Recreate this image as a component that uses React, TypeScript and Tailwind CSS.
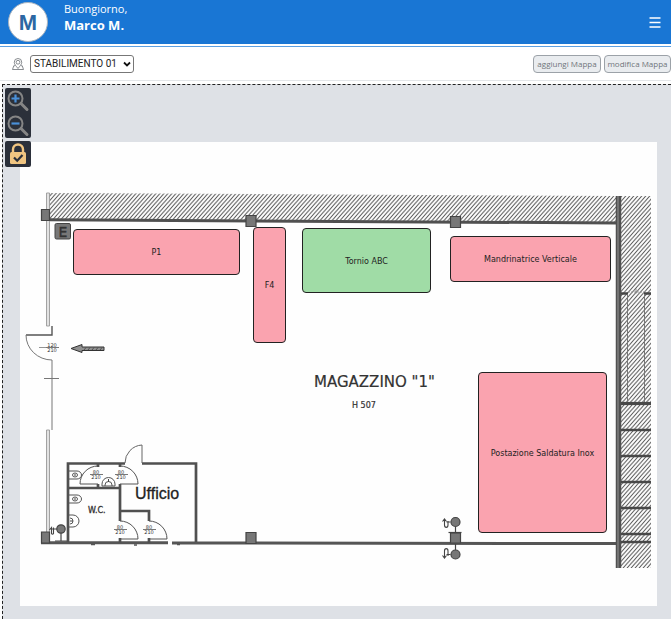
import { useState } from 'react';

interface Machine {
  id: string;
  name: string;
  x: number;
  y: number;
  width: number;
  height: number;
  running: boolean;
}

// size of the floor plan drawing, machines are placed in the same units
const PLAN_WIDTH = 637;
const PLAN_HEIGHT = 464;

const machines: Machine[] = [
  { id: 'p1', name: 'P1', x: 53, y: 87, width: 167, height: 46, running: false },
  { id: 'f4', name: 'F4', x: 233, y: 85, width: 33, height: 116, running: false },
  { id: 'tornio', name: 'Tornio ABC', x: 282, y: 86, width: 129, height: 65, running: true },
  { id: 'mandrinatrice', name: 'Mandrinatrice Verticale', x: 430, y: 94, width: 161, height: 46, running: false },
  { id: 'saldatura', name: 'Postazione Saldatura Inox', x: 458, y: 230, width: 129, height: 161, running: false },
];

const sites = ['STABILIMENTO 01', 'STABILIMENTO 02'];

const percent = (value: number, total: number) => `${(value / total) * 100}%`;

function PinIcon() {
  return (
    <svg viewBox="0 0 24 24" className="w-3 h-3 shrink-0" fill="none" stroke="#6b7075" strokeWidth="1.6">
      <path d="M12 21c-4-5-7.500-8.500-7.500-12.500a7.500 7.500 0 0 1 15 0C19.500 12.500 16 16 12 21z" />
      <circle cx="12" cy="8.500" r="3.800" />
      <path d="M6 15.500H3.500L1 23h22l-2.500-7.500H18" />
    </svg>
  );
}

function ZoomIcon({ plus }: { plus?: boolean }) {
  return (
    <svg viewBox="0 0 25 25" className="w-full h-full" fill="none">
      <path d="M15.500 15.500l6 6" stroke="#858585" strokeWidth="3" strokeLinecap="round" />
      <circle cx="10" cy="10.500" r="7" stroke="#858585" strokeWidth="2" />
      <path d={plus ? 'M6 10.500h8M10 6.500v8' : 'M6 10.500h8'} stroke="#4a90d9" strokeWidth="2.200" />
    </svg>
  );
}

function LockIcon() {
  return (
    <svg viewBox="0 0 26 26" className="w-full h-full" fill="none">
      <path d="M8 12V8.500a5 5 0 0 1 10 0V12" stroke="#f0c581" strokeWidth="2.400" />
      <rect x="5" y="11" width="16" height="12" rx="1.500" fill="#f0c581" />
      <path d="M9 16.500l3.200 3.200 5.300-5.700" stroke="#2b303a" strokeWidth="2.200" />
    </svg>
  );
}

function Door({ x, y, left }: { x: number; y: number; left?: boolean }) {
  const d = left ? `M${x} ${y}A18 18 0 0 0 ${x - 18} ${y + 18}H${x}` : `M${x} ${y}A18 18 0 0 1 ${x + 18} ${y + 18}H${x}`;
  return <path d={d} fill="none" stroke="#555" strokeWidth="1" />;
}

function DoorLabel({ x, y, top = '80' }: { x: number; y: number; top?: string }) {
  return (
    <g fontSize="5" textAnchor="middle" fill="#333">
      <text x={x} y={y - 1}>{top}</text>
      <text x={x} y={y + 4}>210</text>
      <path d={`M${x - 6} ${y - 0.5}h13`} stroke="#555" strokeWidth="0.800" />
    </g>
  );
}

function FloorPlan() {
  return (
    <svg viewBox="20 142 637 464" className="block w-full h-full font-['DejaVu_Sans',sans-serif]">
      <defs>
        <pattern id="hatch" width="4" height="4.500" patternUnits="userSpaceOnUse">
          <path d="M-1 5.625L5 -1.125M-1 1.125L1 -1.125M3 5.625L5 3.375" stroke="#505050" strokeWidth="1" />
        </pattern>
      </defs>

      {/* hatched areas outside the walls */}
      <path d="M49 193L617 196V222L49 219z" fill="url(#hatch)" />
      <path d="M621 196h30v372h-30z" fill="url(#hatch)" />

      {/* perimeter walls */}
      <path d="M50 219.700L617 223" stroke="#505050" strokeWidth="3" />
      <path d="M41 542.700H168M172 543L617 543.500" stroke="#555" strokeWidth="3" />
      <path d="M618.500 196V568" stroke="#505050" strokeWidth="5.500" />
      <path d="M618 196V568" stroke="#777" strokeWidth="1.800" />
      <g fill="#e2e2e2" stroke="#999" strokeWidth="0.900">
        <path d="M46.500 193h3v133h-3z" />
        <path d="M46.500 430h3v110h-3z" />
      </g>

      {/* side rooms on the right */}
      <path d="M621 403.500h30" stroke="#484848" strokeWidth="3.200" />
      <path d="M621 430h30M621 456h30M621 482h30M621 508h30M621 534h30M621 542h30" stroke="#484848" strokeWidth="2.400" />
      <path d="M621 293.500h7M644 293.500h7" stroke="#444" strokeWidth="2.600" />
      <path d="M628 292h16" stroke="#888" strokeWidth="0.800" strokeDasharray="2 1" />
      <path d="M627.500 295V402M644.500 295V402" stroke="#777" strokeWidth="1" />
      <path d="M636 288.500v5" stroke="#777" strokeWidth="0.800" />

      {/* entrance */}
      <path d="M52 326v9H26" fill="none" stroke="#555" strokeWidth="1.400" />
      <path d="M26 335A26 25 0 0 0 52 360V430M44 378.500h15" fill="none" stroke="#777" strokeWidth="1" />
      <DoorLabel x={52} y={348} top="120" />
      <path d="M39 347.500h20" stroke="#777" strokeWidth="0.800" />
      <path d="M71 348.500l11-4v2.500h22v3.500H82v2z" fill="#909090" stroke="#333" strokeWidth="1" />
      <path d="M84 350l2-2.500M88 350l2-2.500M92 350l2-2.500M96 350l2-2.500M100 350l2-2.500" stroke="#444" strokeWidth="0.800" />

      <g fill="#777" stroke="#444" strokeWidth="1.200">
        <path d="M41.500 209.500h8v11h-8z" />
        <path d="M246 215.500h10v11h-10z" />
        <path d="M450.500 216.500h10v11h-10z" />
        <path d="M41.500 532h8v11h-8z" />
        <path d="M246 532.500h10v11h-10z" />
        <path d="M450.500 533h10v10h-10z" />
      </g>
      <path d="M448.500 532.500h13" stroke="#444" strokeWidth="1.200" />

      <rect x="55" y="223.500" width="15.500" height="15.500" rx="1.500" fill="#777" stroke="#444" />
      <text x="63" y="236.500" fontSize="14" textAnchor="middle" fill="#333" stroke="#333" strokeWidth="0.400">E</text>

      {/* hydrants */}
      <g fill="#777" stroke="#444" strokeWidth="1.200">
        <path d="M455.500 527v6M455.500 544v6M450.500 522h-4M450.500 554.500h-4M61 533v8M51 529h6M55 541h12" />
        <circle cx="455.500" cy="522" r="4.500" />
        <circle cx="455.500" cy="554.500" r="4.500" />
        <circle cx="61" cy="529" r="4.200" />
      </g>
      <g fill="none" stroke="#444" strokeWidth="1.100">
        <path d="M442.500 521.500l2-2.500 2 2.500M444.500 519v6a1.500 2 0 0 0 3.500 0v-4" />
        <path d="M442.500 555.500l2 2.500 2-2.500M444.500 558v-7a1.500 2 0 0 1 3.500 0v5" />
        <path d="M49.500 530l2-2.500v6a1.200 1.500 0 0 0 2 0v-6" />
      </g>

      {/* office and toilets */}
      <g fill="none" stroke="#505050" strokeWidth="2.700">
        <path d="M125 463.500H68V542M142 463.500h54V542" />
        <path d="M68 488h52M120 484v37M120 511h29v10" />
        <path d="M98 463v4M120 463v4M98 484v4M120 538v5M149 538v5" />
      </g>
      <path d="M142 463V445A18 18 0 0 0 125 463" fill="none" stroke="#666" strokeWidth="1" />
      <Door x={98} y={466} left />
      <Door x={120} y={466} />
      <Door x={120} y={521} />
      <Door x={149} y={521} />
      <g fill="none" stroke="#555" strokeWidth="1">
        <path d="M102 486v-2a6.500 6.500 0 0 1 13 0v2zM105 486v-1a3.500 3.500 0 0 1 7 0v1" />
        <path d="M69 471h8a4.500 4 0 0 1 0 8h-8M69 495h8a4.500 4 0 0 1 0 8h-8M69 515h4a6 6 0 0 1 0 12h-4" />
        <ellipse cx="75" cy="475" rx="2.500" ry="2" />
        <ellipse cx="75" cy="499" rx="2.500" ry="2" />
        <path d="M70 518a3 3 0 0 1 0 6" />
      </g>
      <path d="M108.500 479v3M74 475h2M74 499h2M70 521h3" stroke="#444" strokeWidth="1" />
      <DoorLabel x={96} y={475} />
      <DoorLabel x={121} y={475} />
      <DoorLabel x={120} y={530} />
      <DoorLabel x={149} y={530} />
      <path d="M91 544.500h4M134 545h3M177 544.500h3" stroke="#555" strokeWidth="1.600" />

      <text x="135" y="499" fontSize="16" fill="#222" stroke="#222" strokeWidth="0.300" className="font-['Liberation_Sans',sans-serif]">Ufficio</text>
      <text x="88" y="513" fontSize="8" fill="#333" stroke="#333" strokeWidth="0.300">W.C.</text>
      <text x="314" y="387" fontSize="15" fill="#333" stroke="#333" strokeWidth="0.200">MAGAZZINO "1"</text>
      <text x="352" y="408" fontSize="8" fill="#333" stroke="#333" strokeWidth="0.200">H 507</text>
    </svg>
  );
}

export default function App() {
  const [site, setSite] = useState(sites[0]);
  const [locked, setLocked] = useState(true);

  return (
    <div className="min-h-screen flex flex-col bg-white font-['Open_Sans','Noto_Sans',sans-serif] overflow-x-hidden">
      <header className="border-b border-[#5b9fe2] pb-0.5">
        <div className="h-11 bg-[#1976d4] flex items-center pl-2 pr-2 text-white">
          <div className="w-10 h-10 rounded-full bg-white border border-[#a9b4c0] flex items-center justify-center text-[22px] font-bold text-[#2c67a3] font-['Liberation_Sans',sans-serif]">
            M
          </div>
          <div className="ml-4 mb-2.5 flex-1">
            <p className="text-[11px] leading-[17px]">Buongiorno,</p>
            <p className="text-[13px] leading-[17px] font-bold">Marco M.</p>
          </div>
          <button aria-label="Menu" className="p-0.5">
            <svg viewBox="0 0 12 12" className="w-3 h-3" stroke="#fff" strokeWidth="1.300">
              <path d="M0.500 2h11M0.500 6.500h11M0.500 11h11" />
            </svg>
          </button>
        </div>
      </header>

      <div className="h-[34px] border-b border-[#e3e6e9] flex items-center pl-3">
        <PinIcon />
        <div className="relative ml-1.5">
          <select
            aria-label="Stabilimento"
            value={site}
            onChange={(e) => setSite(e.target.value)}
            className="appearance-none block w-[104px] h-[18px] pl-[3px] border border-[#777] rounded-[3px] bg-white text-[10px] leading-4 text-[#222] font-['Roboto',sans-serif]"
          >
            {sites.map((s) => (
              <option key={s} value={s}>{s}</option>
            ))}
          </select>
          <svg viewBox="0 0 8 8" className="absolute right-[3px] top-[5px] w-2 h-2 pointer-events-none" fill="none" stroke="#111" strokeWidth="1.800">
            <path d="M1 2.500l3 3 3-3" />
          </svg>
        </div>
        <div className="ml-auto flex gap-[3px] text-[8px] leading-4 text-[#6f757b] whitespace-nowrap">
          <button className="w-[68px] h-[18px] border border-[#9ca2a8] rounded-[4px] bg-[#e9ecef]">aggiungi Mappa</button>
          <button className="w-[67px] h-[18px] border border-[#9ca2a8] rounded-[4px] bg-[#e9ecef]">modifica Mappa</button>
        </div>
      </div>

      <main className="relative flex-1 mt-[3px] ml-0.5 pt-[57px] pl-[17px] pr-3.5 pb-3 bg-[#dee1e6] border-t border-l border-dashed border-[#222]">
        <div className="relative w-full aspect-[637/464] bg-[#fefefe]">
          <FloorPlan />
          {machines.map((m) => (
            <button
              key={m.id}
              className={`absolute pt-0.5 border border-[#222] rounded-[4px] text-[8px] leading-3 text-[#222] whitespace-nowrap flex items-center justify-center font-['DejaVu_Sans',sans-serif] ${
                m.running ? 'bg-[#a0dca6]' : 'bg-[#faa3af]'
              }`}
              style={{
                left: percent(m.x, PLAN_WIDTH),
                top: percent(m.y, PLAN_HEIGHT),
                width: percent(m.width, PLAN_WIDTH),
                height: percent(m.height, PLAN_HEIGHT),
              }}
            >
              {m.name}
            </button>
          ))}
        </div>

        <div className="absolute left-0.5 top-[3px] w-[26px] flex flex-col gap-[3px]">
          <div className="bg-[#2b303a] rounded-[2px] flex flex-col">
            <button aria-label="Ingrandisci" className="h-[25px]">
              <ZoomIcon plus />
            </button>
            <button aria-label="Riduci" className="h-[25px]">
              <ZoomIcon />
            </button>
          </div>
          <button
            aria-label="Blocca mappa"
            aria-pressed={locked}
            onClick={() => setLocked(!locked)}
            className="h-[26px] bg-[#2b303a] rounded-[2px]"
          >
            <LockIcon />
          </button>
        </div>
      </main>
    </div>
  );
}
